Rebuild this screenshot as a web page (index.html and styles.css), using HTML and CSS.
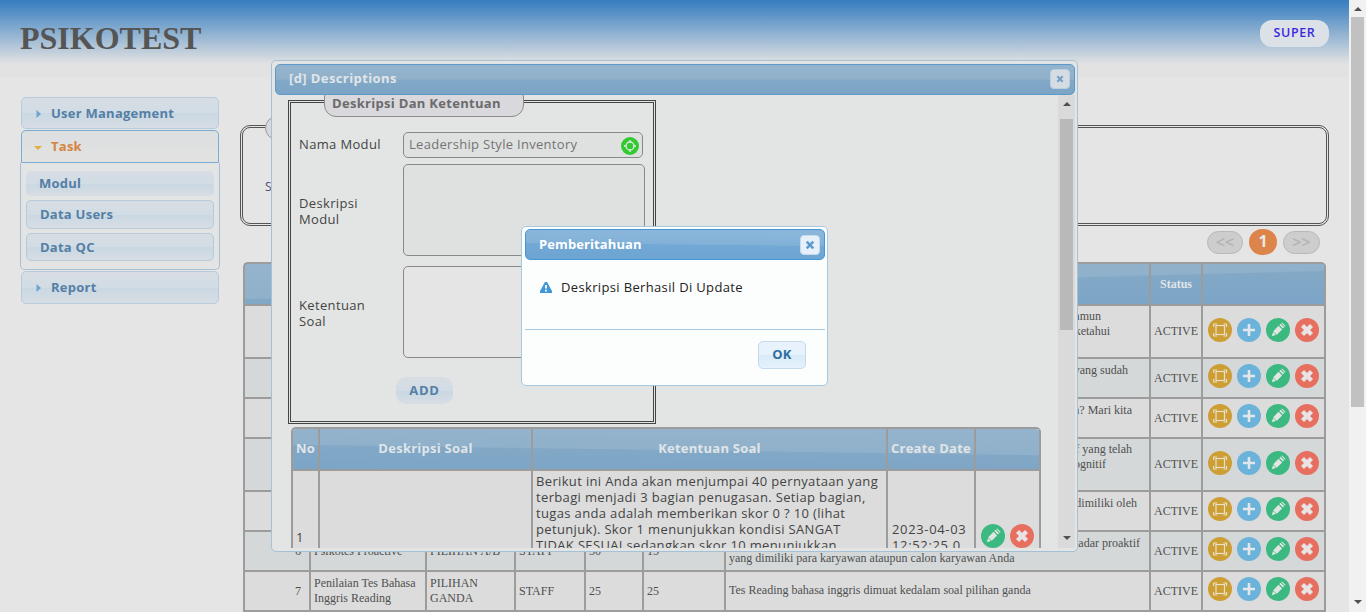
FILE: index.html
```html
<!DOCTYPE html>
<html lang="id">
<head>
<meta charset="utf-8">
<title>Psikotest</title>
<link rel="stylesheet" href="styles.css">
</head>
<body>
<svg class="defs" width="0" height="0">
  <symbol id="i-frame" viewBox="0 0 24 24"><circle cx="12" cy="12" r="12" fill="#cd9e34"/><g fill="none" stroke="#e8e0cd" stroke-width="1.200"><rect x="8" y="7.500" width="8.500" height="9"/><path d="M5.700 9V6H9M15.500 6H18.500V9M18.500 15v3H15.500M9 18H5.700V15"/></g></symbol>
  <symbol id="i-plus" viewBox="0 0 24 24"><circle cx="12" cy="12" r="12" fill="#6bb3da"/><path d="M12 6v12M6 12h12" stroke="#e3e7ea" stroke-width="2.6"/></symbol>
  <symbol id="i-edit" viewBox="0 0 24 24"><circle cx="12" cy="12" r="12" fill="#3bb980"/><path d="M5.700 18.300l1.800-5.300 5-5.200 3.600 3.600-5 5.200zM13.300 7l1.300-1.300 3.600 3.600-1.300 1.300z" fill="#e3e5e3"/><path d="M15.300 5l.8-.6 3.500 3.500-.7.8z" fill="#e3e5e3"/><path d="M7 13.500l3.600 3.600" stroke="#3bb980" stroke-width=".8"/></symbol>
  <symbol id="i-del" viewBox="0 0 24 24"><circle cx="12" cy="12" r="12" fill="#e76f60"/><path d="M7.500 7.500l9 9M16.500 7.500l-9 9" stroke="#e8e4e3" stroke-width="4.300"/></symbol>
  <symbol id="i-x" viewBox="0 0 10 10"><path d="M1.700 1.700l6.600 6.600M8.300 1.700l-6.600 6.600" stroke="currentColor" stroke-width="2.600"/></symbol>
  <symbol id="i-right" viewBox="0 0 6 8"><path d="M.5 0 5 4 .5 8z" fill="currentColor"/></symbol>
  <symbol id="i-down" viewBox="0 0 8 4"><path d="M0 0h8L4 4z" fill="currentColor"/></symbol>
  <symbol id="i-up" viewBox="0 0 8 4"><path d="M0 4h8L4 0z" fill="currentColor"/></symbol>
</svg>
<div class="screen">
  <div class="page">
    <header class="header"><h1>PSIKOTEST</h1><span class="user">SUPER</span></header>
    <div class="body">
      <nav class="menu">
        <div class="item"><svg class="ar"><use href="#i-right"/></svg>User Management</div>
        <div class="item open"><svg class="ad"><use href="#i-down"/></svg>Task</div>
        <div class="panel">
          <a class="sub current">Modul</a>
          <a class="sub">Data Users</a>
          <a class="sub">Data QC</a>
        </div>
        <div class="item report"><svg class="ar"><use href="#i-right"/></svg>Report</div>
      </nav>
      <main class="main">
        <section class="search"><span class="search-legend"></span>S</section>
        <div class="pager"><span class="pg">&lt;&lt;</span><span class="pg on">1</span><span class="pg">&gt;&gt;</span></div>
        <div class="grid">
          <div class="row head"><i></i><i></i><i></i><i></i><i></i><i></i><i></i><b>Status</b><i></i></div>
          <div class="row tall"><i></i><i></i><i></i><i></i><i></i><i></i><p><span style="width:372px">namun</span><span style="width:381px">diketahui</span><span>&nbsp;</span></p><i class="st">ACTIVE</i><i class="act"><svg><use href="#i-frame"/></svg><svg><use href="#i-plus"/></svg><svg><use href="#i-edit"/></svg><svg><use href="#i-del"/></svg></i></div>
          <div class="row alt"><i></i><i></i><i></i><i></i><i></i><i></i><p><span style="width:399px">yang sudah</span><span>&nbsp;</span></p><i class="st">ACTIVE</i><i class="act"><svg><use href="#i-frame"/></svg><svg><use href="#i-plus"/></svg><svg><use href="#i-edit"/></svg><svg><use href="#i-del"/></svg></i></div>
          <div class="row"><i></i><i></i><i></i><i></i><i></i><i></i><p><span style="width:403px">Anda? Mari kita</span><span>&nbsp;</span></p><i class="st">ACTIVE</i><i class="act"><svg><use href="#i-frame"/></svg><svg><use href="#i-plus"/></svg><svg><use href="#i-edit"/></svg><svg><use href="#i-del"/></svg></i></div>
          <div class="row alt tall"><i></i><i></i><i></i><i></i><i></i><i></i><p><span style="width:403px">kognitif yang telah</span><span style="width:377px">kognitif</span><span>&nbsp;</span></p><i class="st">ACTIVE</i><i class="act"><svg><use href="#i-frame"/></svg><svg><use href="#i-plus"/></svg><svg><use href="#i-edit"/></svg><svg><use href="#i-del"/></svg></i></div>
          <div class="row"><i></i><i></i><i></i><i></i><i></i><i></i><p><span style="width:408px">dimiliki oleh</span><span>&nbsp;</span></p><i class="st">ACTIVE</i><i class="act"><svg><use href="#i-frame"/></svg><svg><use href="#i-plus"/></svg><svg><use href="#i-edit"/></svg><svg><use href="#i-del"/></svg></i></div>
          <div class="row alt"><i class="no">6</i><i>Psikotes Proactive</i><i>PILIHAN A/B</i><i>STAFF</i><i>30</i><i>15</i><p><span style="width:411px">kadar proaktif</span><span>yang dimiliki para karyawan ataupun calon karyawan Anda</span></p><i class="st">ACTIVE</i><i class="act"><svg><use href="#i-frame"/></svg><svg><use href="#i-plus"/></svg><svg><use href="#i-edit"/></svg><svg><use href="#i-del"/></svg></i></div>
          <div class="row"><i class="no">7</i><i>Penilaian Tes Bahasa<br>Inggris Reading</i><i>PILIHAN<br>GANDA</i><i>STAFF</i><i>25</i><i>25</i><p><span>Tes Reading bahasa inggris dimuat kedalam soal pilihan ganda</span></p><i class="st">ACTIVE</i><i class="act"><svg><use href="#i-frame"/></svg><svg><use href="#i-plus"/></svg><svg><use href="#i-edit"/></svg><svg><use href="#i-del"/></svg></i></div>
        </div>
      </main>
    </div>
  </div>
  <div class="bar"><svg><use href="#i-up"/></svg><span class="thumb"></span><svg class="end"><use href="#i-down"/></svg></div>
</div>

<div class="dialog">
  <div class="title"><span>[d] Descriptions</span><button class="close"><svg><use href="#i-x"/></svg></button></div>
  <div class="dialog-body">
    <div class="content">
      <section class="form">
        <span class="legend">Deskripsi Dan Ketentuan</span>
        <label class="l1">Nama Modul</label>
        <div class="input">Leadership Style Inventory<svg viewBox="0 0 18 18"><circle cx="9" cy="9" r="9" fill="#34c932"/><circle cx="9" cy="9" r="4" fill="none" stroke="#dfe8df" stroke-width="1.300"/><path d="M9 3v2.500M9 12.500V15M3 9h2.500M12.500 9H15" stroke="#dfe8df" stroke-width="1.400"/></svg></div>
        <label class="l2">Deskripsi<br>Modul</label><div class="area"></div>
        <label class="l3">Ketentuan<br>Soal</label><div class="area light"></div>
        <button class="add">ADD</button>
      </section>
      <div class="soal">
        <div class="srow shead"><b>No</b><b>Deskripsi Soal</b><b>Ketentuan Soal</b><b>Create Date</b><b></b></div>
        <div class="srow"><i>1</i><i></i><p>Berikut ini Anda akan menjumpai 40 pernyataan yang<br>terbagi menjadi 3 bagian penugasan. Setiap bagian,<br>tugas anda adalah memberikan skor 0 ? 10 (lihat<br>petunjuk). Skor 1 menunjukkan kondisi SANGAT<br>TIDAK SESUAI sedangkan skor 10 menunjukkan</p><i class="date">2023-04-03<br>12:52:25.0</i><i class="sact"><svg><use href="#i-edit"/></svg><svg><use href="#i-del"/></svg></i></div>
      </div>
    </div>
    <div class="bar inner"><svg><use href="#i-up"/></svg><span class="thumb"></span><svg class="end"><use href="#i-down"/></svg></div>
  </div>
</div>

<div class="alert">
  <div class="title"><span>Pemberitahuan</span><button class="close"><svg><use href="#i-x"/></svg></button></div>
  <div class="msg"><svg viewBox="0 0 12 11"><path d="M5 0h2l5 9v2H0V9z" fill="#4297d7"/><path d="M6 3v3.500M6 7.800v1.700" stroke="#fff" stroke-width="1.800"/></svg><span>Deskripsi Berhasil Di Update</span></div>
  <div class="foot"><button class="ok">OK</button></div>
</div>
</body>
</html>
```
FILE: styles.css
```css
* { box-sizing: border-box; }
html, body { margin: 0; height: 612px; overflow: hidden; }
body { font: 13px/16px "Open Sans", "Noto Sans", sans-serif; letter-spacing: .35px; color: #444; background: #e5e5e5; }
button { font: inherit; letter-spacing: inherit; padding: 0; margin: 0; }
i { font-style: normal; }
p { margin: 0; }
.defs { position: absolute; }
.screen { display: flex; height: 612px; }
.page { width: 1349px; height: 612px; overflow: hidden; }
.header { height: 77px; padding: 0 20px; display: flex; justify-content: space-between; background: linear-gradient(#3a80c0 0, #3a80c0 2px, #e2e2e2 64px); }
.header h1 { margin: 20px 0 0; font: bold 32px/37px "Liberation Serif", serif; letter-spacing: 0; color: #555; }
.user { margin-top: 20px; width: 69px; height: 27px; border-radius: 12px; background: #dce1e7; text-align: center; line-height: 26px; font-weight: 600; font-size: 12.5px; letter-spacing: .6px; color: #3a28e0; }
.body { display: flex; }
.menu { width: 200px; margin: 20px 0 0 20px; font-weight: 700; letter-spacing: .25px; color: #557fa5; }
.item { height: 32px; margin: 0 1px 1px; padding-left: 29px; display: flex; align-items: center; position: relative; border: 1px solid #b8cbdb; border-radius: 5px; background: linear-gradient(#d8dde3, #d1dce5 50%, #c9d8e3 51%, #d7dde4); }
.item svg { position: absolute; left: 14px; top: 12px; color: #72a3cb; }
.item .ar { width: 6px; height: 8px; }
.item .ad { width: 8px; height: 4px; left: 12px; top: 15px; color: #e1b23b; }
.item.open { height: 33px; margin-bottom: 0; padding-bottom: 2px; border-color: #79abd3; border-radius: 5px 5px 0 0; color: #d5833f; background: linear-gradient(#dcdfe0, #e2e2e1); }
.item.report { height: 33px; margin-top: 1px; padding-bottom: 2px; }
.panel { height: 107px; padding: 8px 5px; border: 1px solid #a6c0d5; border-top: 0; border-radius: 0 0 5px 5px; background: #e2e5e3; display: flex; flex-direction: column; gap: 4px; }
.sub { height: 29px; padding-left: 13px; border: 1px solid #b8c9da; border-radius: 5px; line-height: 26px; background: linear-gradient(#d8dde3, #d1dce5 50%, #c9d8e3 51%, #d7dde4); }
.sub.current { height: 26px; border: 0; line-height: 25px; }
.main { width: 1089px; margin: 48px 0 0 20px; font: 12px/15px "Liberation Serif", serif; letter-spacing: 0; color: #505050; }
.search { position: relative; height: 101px; border: 3px double #555; border-radius: 10px; padding: 51px 0 0 22px; font: 12px/16px "Open Sans", sans-serif; color: #505078; }
.search-legend { position: absolute; left: 22px; top: -12px; width: 150px; height: 24px; border: 1px solid #999; border-radius: 12px; background: #d8d8dd; }
.pager { height: 36px; display: flex; justify-content: flex-end; padding: 5px 9px 0 0; gap: 6px; }
.pg { width: 36px; height: 23px; border: 1px solid #b8b8b8; border-radius: 12px; background: #cdcdcd; color: #b3b3b3; text-align: center; font: 600 16px/20px "Open Sans", sans-serif; }
.pg:last-child { width: 37px; }
.pg.on { width: 28px; height: 26px; margin-top: -2px; border: 0; border-radius: 14px; background: #dd844a; color: #e8e8e8; font-weight: 700; line-height: 25px; }
.grid { width: 1083px; margin-left: 3px; border: solid #9c9c9c; border-width: 2px 0 0 2px; border-radius: 5px 5px 0 0; overflow: hidden; background: #9c9c9c; }
.row { display: grid; grid-template-columns: 66px 116px 89px 70px 58px 82px 425px 52px 123px; height: 40px; background: #dcdcdc; }
.row.tall { height: 53px; }
.row.alt { background: #d4d8d8; }
.row > * { border: solid #9c9c9c; border-width: 0 2px 2px 0; padding: 0 3px; display: flex; align-items: center; white-space: nowrap; }
.row .no { justify-content: flex-end; padding-right: 8px; }
.row p { flex-direction: column; align-items: flex-start; justify-content: center; padding-bottom: 1px; }
.row p span { display: block; text-align: right; }
.row .st { font-size: 12px; }
.row.head { height: 42px; background: linear-gradient(178.500deg, #95b3cc, #90b1cb 49%, #82a8c6 51%, #7ba4c6); color: #e0e5e8; }
.row.head b { justify-content: center; font-size: 12px; }
.row .act { padding: 0 0 4px 5px; gap: 5px; }
.row.tall .act { padding-bottom: 3px; }
.act svg, .sact svg { width: 24px; height: 24px; flex: none; }
.bar { width: 17px; height: 612px; background: #f1f1f1; color: #505050; display: flex; flex-direction: column; align-items: center; padding: 7px 0 8px; }
.bar svg { width: 8px; height: 4px; flex: none; }
.bar .thumb { width: 13px; height: 390px; margin: 6px 0 auto; background: #c1c1c1; }
.dialog { position: absolute; left: 271px; top: 60px; width: 807px; height: 492px; padding: 3px; border: 1px solid #a6c0d5; border-radius: 5px; background: #e2e5e3; }
.title { display: flex; justify-content: space-between; align-items: center; height: 31px; padding: 0 4px 0 13px; border: 1px solid #5c9ac8; border-radius: 5px; background: linear-gradient(180deg, #95b3cc, #90b1cb 49%, #82a8c6 51%, #7ba4c6); color: #e0e5e8; font-weight: 700; letter-spacing: .4px; }
.title span { margin-top: -3px; }
.dialog .title { width: 800px; }
.close { width: 20px; height: 20px; border: 1px solid #bccfdf; border-radius: 4px; background: #d5dce4; color: #759fc5; display: flex; align-items: center; justify-content: center; }
.dialog .close { margin-top: -2px; }
.close svg { width: 8px; height: 8px; }
.dialog-body { display: flex; width: 800px; height: 453px; overflow: hidden; }
.content { width: 783px; padding: 5px 0 0 13px; }
.form { position: relative; width: 368px; height: 324px; border: 3px double #444; padding: 29px 8px 0; display: grid; grid-template-columns: 104px 242px; grid-template-rows: 32px 102px 92px 46px; align-items: center; align-content: start; }
.legend { position: absolute; left: 33px; top: -18px; width: 200px; height: 32px; padding: 11px 0 0 7px; border: 1px solid #8c8c8c; border-radius: 12px; background: #d8d8dd; font-weight: 700; color: #6b6b6b; white-space: nowrap; line-height: 13px; }
.form .l1 { padding-bottom: 9px; }
.form .l2 { padding-bottom: 8px; }
.form .l3 { padding-top: 2px; }
.legend { letter-spacing: .3px; }
.input { align-self: start; display: flex; justify-content: space-between; align-items: center; width: 240px; height: 26px; padding: 0 3px 2px 5px; border: 1px solid #888; border-radius: 5px; background: #dfe1e0; color: #737373; letter-spacing: .3px; }
.input svg { width: 18px; height: 18px; margin-top: 4px; }
.area { align-self: start; height: 92px; border: 1px solid #888; border-radius: 5px; background: #dfe1e0; }
.area.light { background: #e5e5e5; }
.add { grid-column: 2; align-self: end; width: 57px; height: 27px; margin-left: -7px; padding-bottom: 2px; border: 0; border-radius: 10px; background: linear-gradient(#d8dde3, #d1dce5 50%, #c9d8e3 51%, #d7dde4); color: #557fa5; font-weight: 700; letter-spacing: .7px; }
.soal { width: 750px; margin: 3px 0 0 3px; border: solid #9c9c9c; border-width: 2px 0 0 2px; border-radius: 5px 5px 0 0; overflow: hidden; }
.srow { display: grid; grid-template-columns: 27px 213px 355px 88px 65px; height: 135px; background: #dcdcdc; }
.shead { height: 42px; background: linear-gradient(180.800deg, #95b3cc, #90b1cb 49%, #82a8c6 51%, #7ba4c6); color: #e0e5e8; letter-spacing: .25px; }
.srow > * { border: solid #9c9c9c; border-width: 0 2px 2px 0; padding: 0 3px 2px; display: flex; align-items: center; white-space: nowrap; }
.shead > b { justify-content: center; padding: 0 0 2px; }
.srow p { display: block; padding-top: 2px; }
.srow .date { padding-left: 4px; letter-spacing: .65px; }
.srow .sact { gap: 5px; padding: 0 0 3px 5px; }
.inner { height: 453px; background: #dadada; }
.inner .thumb { height: 211px; margin-top: 13px; background: #b9b9b9; }
.alert { position: absolute; left: 521px; top: 226px; width: 307px; height: 160px; padding: 2px 3px; border: 1px solid #a6c9e2; border-radius: 5px; background: #fcfdfd; color: #222; }
.alert .title { width: 300px; border-color: #4297d7; background: linear-gradient(180.600deg, #8cb7da, #82b1d8 49%, #72a8d4 51%, #6ca4d2); color: #fff; letter-spacing: .1px; }
.alert .title span { margin-top: -1px; }
.alert .close { margin-top: 1px; background: #e6f0fa; border-color: #c5dbec; color: #5e9bcd; }
.alert .close svg { width: 10px; height: 10px; }
.msg { height: 69px; padding: 19px 0 0 15px; display: flex; gap: 9px; }
.msg svg { width: 12px; height: 11px; margin-top: 3px; }
.foot { width: 300px; border-top: 1px solid #a6c9e2; padding: 11px 19px 0; display: flex; justify-content: flex-end; }
.ok { width: 48px; height: 28px; padding-bottom: 2px; border: 1px solid #c5dbec; border-radius: 5px; background: linear-gradient(#e8f2fc, #e6f2fc 48%, #d8eaf9 51%, #e6f2fc); color: #2e6e9e; font-weight: 700; }
```
